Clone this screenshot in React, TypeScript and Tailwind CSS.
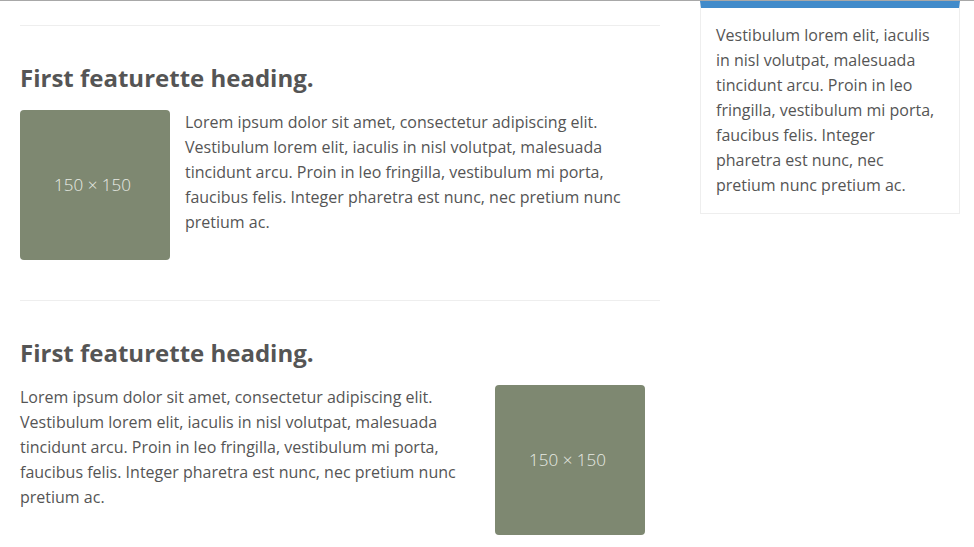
import React from "react";

const font = { fontFamily: '"Open Sans", "Noto Sans", sans-serif' };

function Placeholder() {
  return (
    <div className="w-[150px] h-[150px] shrink-0 rounded-[4px] bg-[#7e8871] flex items-center justify-center pr-[5px] text-[17px] font-light text-[#e8ebe4]">
      150 × 150
    </div>
  );
}

const para =
  "Lorem ipsum dolor sit amet, consectetur adipiscing elit. Vestibulum lorem elit, iaculis in nisl volutpat, malesuada tincidunt arcu. Proin in leo fringilla, vestibulum mi porta, faucibus felis. Integer pharetra est nunc, nec pretium nunc pretium ac.";

export default function App() {
  return (
    <div className="w-[974px] h-[547px] overflow-hidden bg-white border-t border-[#a8a8a8] text-[#555555]" style={font}>
      <div className="flex gap-[40px] px-[20px]">
        <div className="w-[640px] shrink-0">
          <hr className="mt-[24px] border-0 border-t border-[#eeeeee]" />
          <h2 className="mt-[37px] text-[24px] leading-[30px] font-bold text-[#555555]">First featurette heading.</h2>
          <div className="mt-[17px] flex">
            <div className="mr-[15px]">
              <Placeholder />
            </div>
            <p className="flex-1 text-[16px] leading-[25px]">{para}</p>
          </div>
          <hr className="mt-[40px] border-0 border-t border-[#eeeeee]" />
          <h2 className="mt-[37px] text-[24px] leading-[30px] font-bold text-[#555555]">First featurette heading.</h2>
          <div className="mt-[17px] flex">
            <p className="flex-1 text-[16px] leading-[25px]">{para}</p>
            <div className="ml-[15px] mr-[15px]">
              <Placeholder />
            </div>
          </div>
        </div>
        <div className="w-[260px] shrink-0">
          <div className="border border-[#eeeeee] border-t-[7px] border-t-[#428bca] px-[15px] py-[15px] text-[16px] leading-[25px]">
            Vestibulum lorem elit, iaculis in nisl volutpat, malesuada tincidunt arcu. Proin in leo fringilla, vestibulum mi porta, faucibus felis. Integer pharetra est nunc, nec pretium nunc pretium ac.
          </div>
        </div>
      </div>
    </div>
  );
}
